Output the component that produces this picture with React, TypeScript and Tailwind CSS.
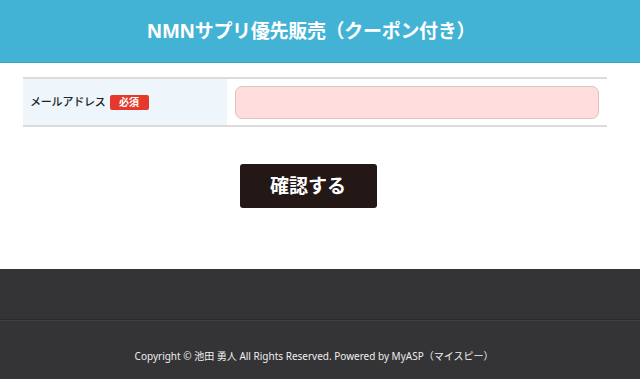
export default function App() {
  return (
    <div
      className="min-h-[379px] bg-white flex flex-col"
      style={{ fontFamily: '"Noto Sans", "Noto Sans CJK JP", sans-serif' }}
    >
      {/* ヘッダー */}
      <header className="h-[63px] bg-[#42b3d5] border-b border-[#3aa3c3] flex items-center justify-center pr-[18px]">
        <h1 className="text-[19px] font-bold text-white tracking-[-0.3px] leading-none">
          NMNサプリ優先販売（クーポン付き）
        </h1>
      </header>

      {/* フォーム */}
      <main className="flex-1 flex flex-col">
        <div className="ml-[23px] mr-[33px] mt-[14px] border-t-2 border-b-2 border-[#dcdcdc] flex h-[50px]">
          <div className="w-[204px] bg-[#eef5fb] flex items-center pl-[7px] gap-[4px]">
            <span className="text-[11px] font-medium text-[#222] tracking-[-0.2px]">メールアドレス</span>
            <span className="bg-[#e53a2b] text-white text-[10px] font-bold w-[39px] text-center h-[15px] leading-[15px] rounded-[2px]">
              必須
            </span>
          </div>
          <div className="flex-1 flex items-center pl-[8px] pr-[8px]">
            <input
              type="email"
              className="w-full h-[33px] bg-[#ffdddd] border border-[#dcc4c4] rounded-[7px] outline-none"
            />
          </div>
        </div>

        <div className="flex justify-center mt-[37px] pr-[24px]">
          <button className="w-[137px] h-[44px] bg-[#231815] text-white text-[19px] font-bold rounded-[3px]">
            確認する
          </button>
        </div>
      </main>

      {/* フッター */}
      <footer className="bg-[#343436] mt-[60px]">
        <div className="h-[51px] border-b border-[#2a2a2b]" />
        <div className="h-[59px] border-t border-[#3f3f41] flex items-center justify-center pr-[12px] pt-[12px]">
          <p className="text-[10px] text-[#eeeeee]">
            Copyright © 池田 勇人 All Rights Reserved. Powered by MyASP（マイスピー）
          </p>
        </div>
      </footer>
    </div>
  );
}
